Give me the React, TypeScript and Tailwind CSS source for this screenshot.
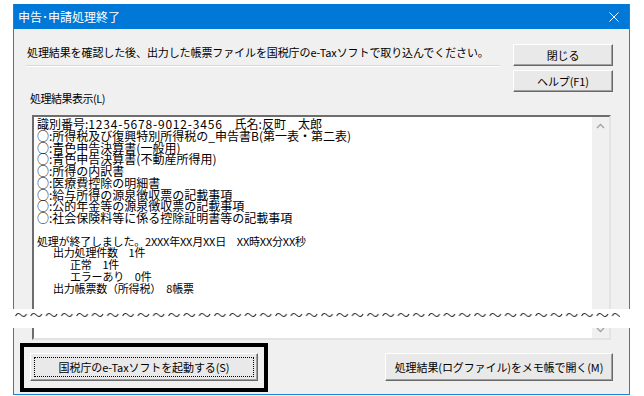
import React from 'react';

const Chevron = ({ down }: { down?: boolean }) => (
  <svg width="9" height="6" viewBox="0 0 9 6" className="block">
    <polyline
      points={down ? '1,1 4.5,4.5 8,1' : '1,5 4.5,1.5 8,5'}
      fill="none"
      stroke="#a3a3a3"
      strokeWidth="1.4"
    />
  </svg>
);

function WinButton({ label, className = '' }: { label: string; className?: string }) {
  return (
    <div
      className={`flex items-center justify-center whitespace-nowrap bg-[#e9e9e9] border border-t-white border-l-white border-b-[#696969] border-r-[#696969] shadow-[inset_-1px_-1px_0_#a0a0a0] ${className}`}
    >
      {label}
    </div>
  );
}

export default function App() {
  const resultLines = [
    '○:所得税及び復興特別所得税の_申告書B(第一表・第二表)',
    '○:青色申告決算書(一般用)',
    '○:青色申告決算書(不動産所得用)',
    '○:所得の内訳書',
    '○:医療費控除の明細書',
    '○:給与所得の源泉徴収票の記載事項',
    '○:公的年金等の源泉徴収票の記載事項',
    '○:社会保険料等に係る控除証明書等の記載事項',
  ];

  return (
    <div className="relative w-[644px] h-[396px] overflow-hidden bg-white font-['Noto_Sans_CJK_JP',sans-serif] text-[11px] tracking-[-0.1px] text-black">
      <div className="ml-[13px] mt-[4px] w-[617px] border-x border-b border-[#1883d7]">
        {/* title bar */}
        <div className="h-[25px] bg-[#0078d7] flex items-center justify-between pl-[4px] pr-[10px] text-white text-[12px] tracking-normal">
          <span>申告･申請処理終了</span>
          <svg width="10" height="10" viewBox="0 0 10 10">
            <path d="M0.5 0.5 L9.5 9.5 M9.5 0.5 L0.5 9.5" stroke="white" strokeWidth="1" />
          </svg>
        </div>

        {/* body */}
        <div className="h-[365px] bg-[#f0f0f0]">
          <div className="flex justify-between h-[86px]">
            <div className="w-[474px] ml-[12px] pt-[13px]">
              <div className="h-[20px] leading-[20px] pl-[1px] whitespace-nowrap">
                処理結果を確認した後、出力した帳票ファイルを国税庁のe-Taxソフトで取り込んでください。
              </div>
              <div className="mt-[3px] border-t border-b border-t-[#d9d9d9] border-b-white" />
              <div className="mt-[23px] h-[16px] leading-[16px] pl-[4px] tracking-[-0.5px]">処理結果表示(L)</div>
            </div>
            <div className="mr-[16px] pt-[15px] flex flex-col gap-[4px]">
              <WinButton label="閉じる" className="w-[100px] h-[22px]" />
              <WinButton label="ヘルプ(F1)" className="w-[100px] h-[22px]" />
            </div>
          </div>

          {/* result text box */}
          <div className="ml-[18px] w-[579px] h-[225px] flex bg-white border-2 border-t-[#6d6d6d] border-l-[#6d6d6d] border-r-[#e3e3e3] border-b-[#e3e3e3]">
            <div className="flex-1 pl-[3px] pt-[1px] leading-[11.75px] whitespace-pre text-[12px] tracking-normal">
              <div>
                識別番号:<span className="tracking-[0.8px]">1234-5678-9012-3456</span>　氏名:反町　太郎
              </div>
              {resultLines.map((l) => (
                <div key={l}>{l}</div>
              ))}
              <div className="h-[11.75px]" />
              <div className="text-[11px] tracking-[-0.2px]">
                <div>処理が終了しました。2XXX年XX月XX日　XX時XX分XX秒</div>
                <div className="pl-[16px]">出力処理件数　1件</div>
                <div className="pl-[33px]">正常　1件</div>
                <div className="pl-[33px]">エラーあり　0件</div>
                <div className="pl-[16px]">出力帳票数（所得税）　8帳票</div>
              </div>
            </div>
            <div className="w-[17px] bg-[#f0f0f0] flex flex-col items-center justify-between pt-[6px] pb-[5px]">
              <Chevron />
              <Chevron down />
            </div>
          </div>

          {/* bottom buttons */}
          <div className="flex items-start mt-[3px]">
            <div className="ml-[6px] border-4 border-black pt-[6px] pl-[6px] pr-[6px] pb-[7px]">
              <div className="flex w-[228px] h-[28px] bg-[#e9e9e9] border border-t-white border-l-white border-b-[#696969] border-r-[#696969] shadow-[inset_-1px_-1px_0_#a0a0a0]">
                <div className="flex-1 m-[3px] border border-dotted border-black flex items-center justify-center whitespace-nowrap">
                  国税庁のe-Taxソフトを起動する(S)
                </div>
              </div>
            </div>
            <WinButton
              label="処理結果(ログファイル)をメモ帳で開く(M)"
              className="ml-auto mr-[16px] mt-[10px] w-[228px] h-[28px]"
            />
          </div>
        </div>
      </div>

      {/* omission band */}
      <div className="absolute left-0 right-0 top-[309px] h-[19px] bg-white">
        <svg width="606" height="8" className="block ml-[14px] mt-[2px]">
          <defs>
            <pattern id="tilde" width="15.3" height="8" patternUnits="userSpaceOnUse">
              <path d="M1.5 5 C3 1.8 5 1.8 7 4 S11 6.2 12.5 3" fill="none" stroke="#222" strokeWidth="1" />
            </pattern>
          </defs>
          <rect width="606" height="8" fill="url(#tilde)" />
        </svg>
      </div>
    </div>
  );
}
